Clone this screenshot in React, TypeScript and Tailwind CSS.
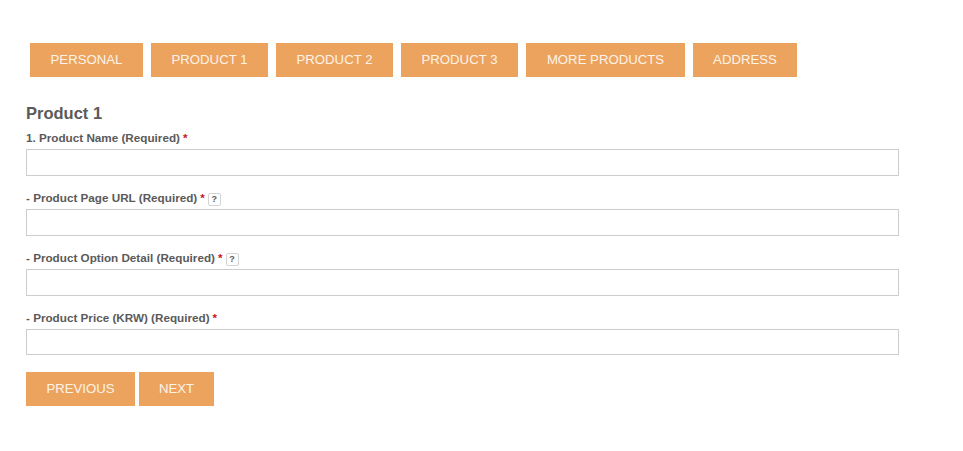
const tabs = [
  { label: "PERSONAL", width: "w-[113px]" },
  { label: "PRODUCT 1", width: "w-[117px]" },
  { label: "PRODUCT 2", width: "w-[117px]" },
  { label: "PRODUCT 3", width: "w-[117px]" },
  { label: "MORE PRODUCTS", width: "w-[159px]" },
  { label: "ADDRESS", width: "w-[104px]" },
];

const fields = [
  { label: "1. Product Name (Required)", help: false, inputHeight: "h-[27px]" },
  { label: "- Product Page URL (Required)", help: true, inputHeight: "h-[27px]" },
  { label: "- Product Option Detail (Required)", help: true, inputHeight: "h-[27px]" },
  { label: "- Product Price (KRW) (Required)", help: false, inputHeight: "h-[26px]" },
];

export default function App() {
  return (
    <div className="w-[963px] h-[451px] bg-white overflow-hidden font-['Liberation_Sans',Arial,sans-serif] text-[#5a5a5a]">
      <div className="flex gap-2 pt-[43px] pl-[30px]">
        {tabs.map((t) => (
          <button
            key={t.label}
            className={`h-[34px] ${t.width} bg-[#eca35e] text-[#fdf3e8] text-[13.2px] text-center`}
          >
            {t.label}
          </button>
        ))}
      </div>

      <div className="pl-[26px] w-[899px]">
        <h2 className="mt-[26px] h-[20px] text-[16.5px] leading-[20px] font-bold">Product 1</h2>
        {fields.map((f, i) => (
          <div key={f.label} className={i === 0 ? "mt-[5px]" : "mt-[12px]"}>
            <label className="flex items-center h-[20px] text-[11.7px] font-bold">
              {f.label}
              <span className="ml-[3px] text-[#c4161c]">*</span>
              {f.help && (
                <span className="ml-[3px] mt-[2px] flex items-center justify-center w-[13px] h-[13px] border border-[#d4d4d4] rounded-[2px] text-[9px] leading-none">
                  ?
                </span>
              )}
            </label>
            <input
              type="text"
              className={`block w-full ${f.inputHeight} mt-[1px] border border-[#cdcdcd] bg-white`}
            />
          </div>
        ))}
        <div className="flex gap-[4px] mt-[17px]">
          <button className="h-[34px] w-[109px] bg-[#eca35e] text-[#fdf3e8] text-[13.2px]">PREVIOUS</button>
          <button className="h-[34px] w-[75px] bg-[#eca35e] text-[#fdf3e8] text-[13.2px]">NEXT</button>
        </div>
      </div>
    </div>
  );
}
